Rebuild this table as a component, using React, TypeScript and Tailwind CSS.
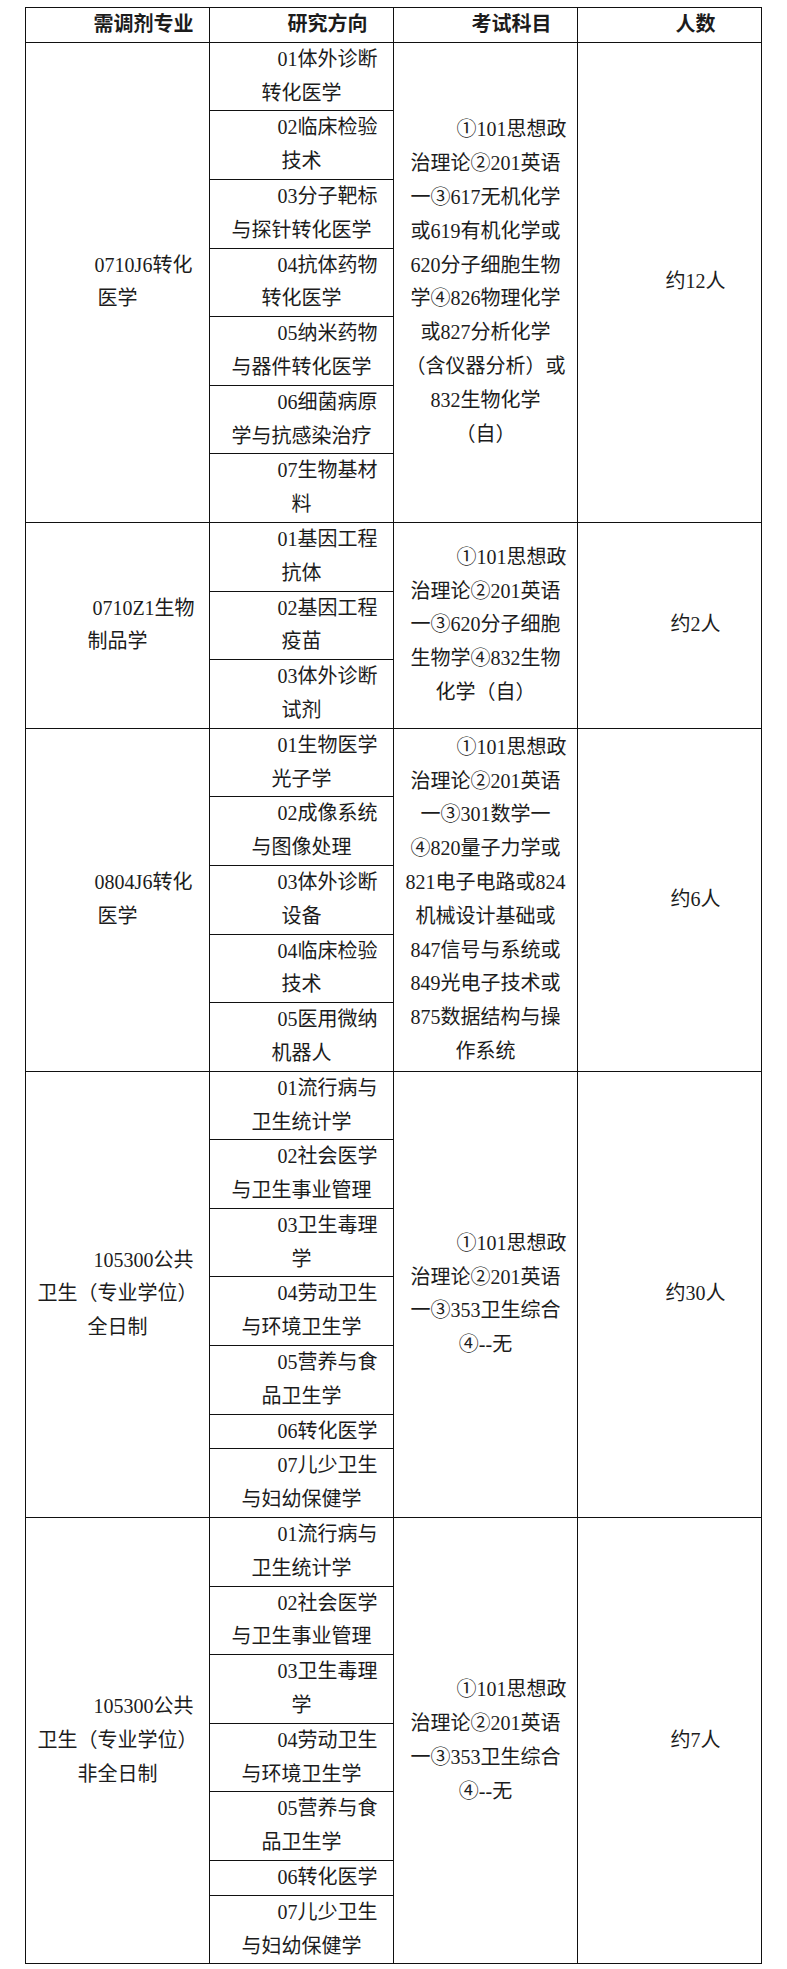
import * as React from "react"

type Group = {
  major: string[]
  dirs: string[][]
  exam: string[]
  num: string
}

const publicDirs = [
  ["01流行病与", "卫生统计学"],
  ["02社会医学", "与卫生事业管理"],
  ["03卫生毒理", "学"],
  ["04劳动卫生", "与环境卫生学"],
  ["05营养与食", "品卫生学"],
  ["06转化医学"],
  ["07儿少卫生", "与妇幼保健学"],
]

const publicExam = ["①101思想政", "治理论②201英语", "一③353卫生综合", "④--无"]

const groups: Group[] = [
  {
    major: ["0710J6转化", "医学"],
    dirs: [
      ["01体外诊断", "转化医学"],
      ["02临床检验", "技术"],
      ["03分子靶标", "与探针转化医学"],
      ["04抗体药物", "转化医学"],
      ["05纳米药物", "与器件转化医学"],
      ["06细菌病原", "学与抗感染治疗"],
      ["07生物基材", "料"],
    ],
    exam: [
      "①101思想政",
      "治理论②201英语",
      "一③617无机化学",
      "或619有机化学或",
      "620分子细胞生物",
      "学④826物理化学",
      "或827分析化学",
      "（含仪器分析）或",
      "832生物化学",
      "（自）",
    ],
    num: "约12人",
  },
  {
    major: ["0710Z1生物", "制品学"],
    dirs: [
      ["01基因工程", "抗体"],
      ["02基因工程", "疫苗"],
      ["03体外诊断", "试剂"],
    ],
    exam: ["①101思想政", "治理论②201英语", "一③620分子细胞", "生物学④832生物", "化学（自）"],
    num: "约2人",
  },
  {
    major: ["0804J6转化", "医学"],
    dirs: [
      ["01生物医学", "光子学"],
      ["02成像系统", "与图像处理"],
      ["03体外诊断", "设备"],
      ["04临床检验", "技术"],
      ["05医用微纳", "机器人"],
    ],
    exam: [
      "①101思想政",
      "治理论②201英语",
      "一③301数学一",
      "④820量子力学或",
      "821电子电路或824",
      "机械设计基础或",
      "847信号与系统或",
      "849光电子技术或",
      "875数据结构与操",
      "作系统",
    ],
    num: "约6人",
  },
  {
    major: ["105300公共", "卫生（专业学位）", "全日制"],
    dirs: publicDirs,
    exam: publicExam,
    num: "约30人",
  },
  {
    major: ["105300公共", "卫生（专业学位）", "非全日制"],
    dirs: publicDirs,
    exam: publicExam,
    num: "约7人",
  },
]

const cell =
  "border border-[#111] w-[184px] px-[9px] py-0 text-center align-middle indent-[52px] leading-[33.8px] whitespace-nowrap"

function Lines({ lines }: { lines: string[] }) {
  return (
    <>
      {lines.map((l, i) => (
        <React.Fragment key={i}>
          {i > 0 && <br />}
          {l}
        </React.Fragment>
      ))}
    </>
  )
}

export default function App() {
  return (
    <div className="min-h-screen bg-white pt-[7px] text-[20px] text-[#1c1c1c] font-['Liberation_Serif','Noto_Sans_CJK_SC',serif]">
      <table className="mx-auto w-[736px] table-fixed border-collapse">
        <colgroup>
          <col className="w-[184px]" />
          <col className="w-[184px]" />
          <col className="w-[184px]" />
          <col className="w-[184px]" />
        </colgroup>
        <thead>
          <tr>
            <th className={cell + " font-bold"}>需调剂专业</th>
            <th className={cell + " font-bold"}>研究方向</th>
            <th className={cell + " font-bold"}>考试科目</th>
            <th className={cell + " font-bold"}>人数</th>
          </tr>
        </thead>
        <tbody>
          {groups.map((g, gi) =>
            g.dirs.map((d, di) => (
              <tr key={gi + "-" + di}>
                {di === 0 && (
                  <td rowSpan={g.dirs.length} className={cell}>
                    <Lines lines={g.major} />
                  </td>
                )}
                <td className={cell}>
                  <Lines lines={d} />
                </td>
                {di === 0 && (
                  <td rowSpan={g.dirs.length} className={cell}>
                    <Lines lines={g.exam} />
                  </td>
                )}
                {di === 0 && (
                  <td rowSpan={g.dirs.length} className={cell}>
                    {g.num}
                  </td>
                )}
              </tr>
            ))
          )}
        </tbody>
      </table>
    </div>
  )
}
